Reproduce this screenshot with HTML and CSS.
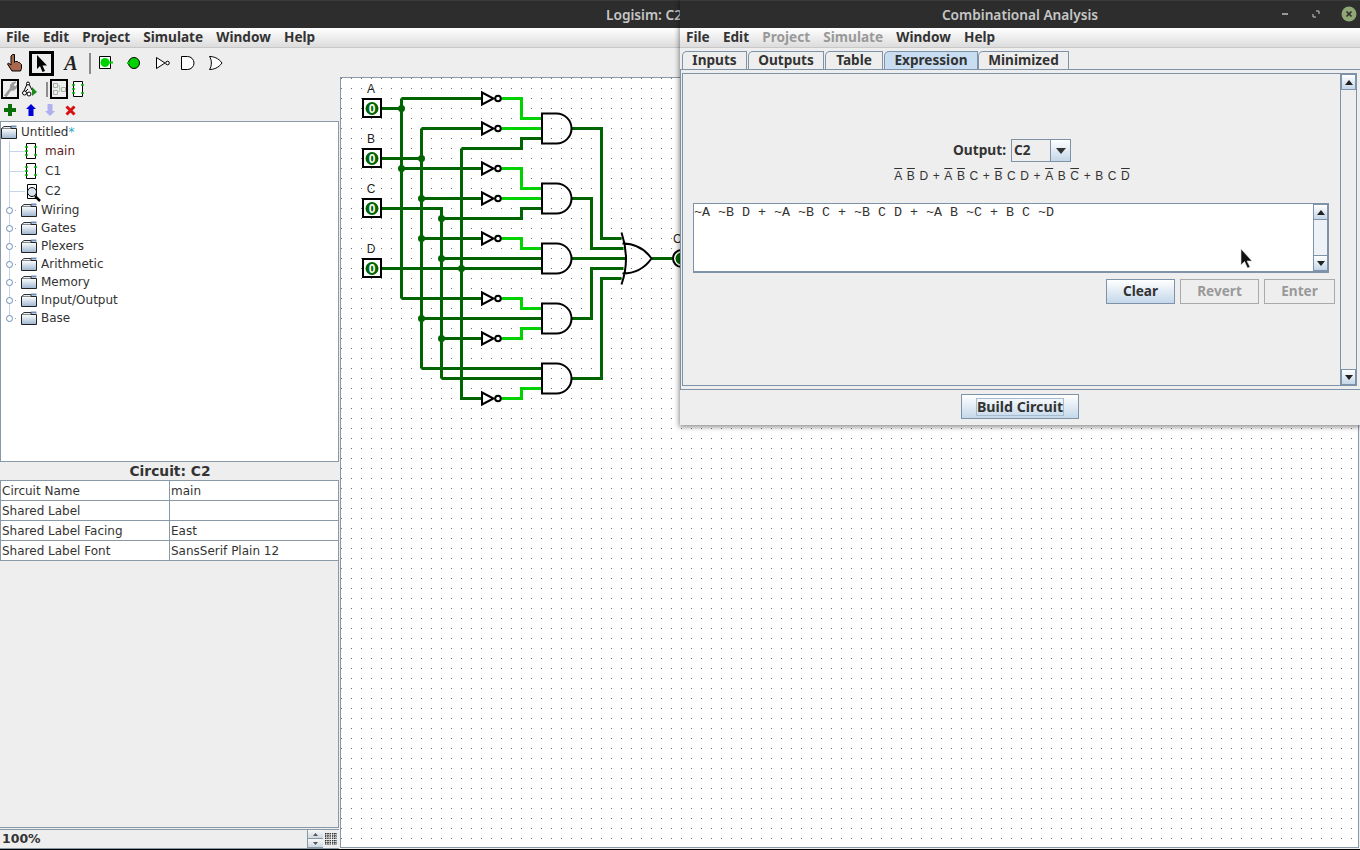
FILE: index.html
```html
<!DOCTYPE html>
<html lang="en">
<head>
<meta charset="utf-8">
<title>Logisim: C2</title>
<link rel="stylesheet" href="styles.css">
</head>
<body>
<svg class="defs" width="0" height="0" aria-hidden="true">
  <defs>
    <symbol id="folder" viewBox="0 0 16 14">
      <path d="M10 .5h5.500v2h-5.500z" fill="#6d8db8"/>
      <path d="M.5 3.500h15v10H.5z" fill="url(#fg)" stroke="#222"/>
      <path d="M.5 3.500 3 1.500h7v2" fill="#e8eef5" stroke="#333"/>
    </symbol>
    <linearGradient id="fg" x1="0" y1="0" x2="0" y2="1">
      <stop offset="0" stop-color="#ffffff"/><stop offset="1" stop-color="#9db5d0"/>
    </linearGradient>
    <symbol id="chip" viewBox="0 0 12 16">
      <path d="M1.500 .5h9v15h-9z" fill="#fff" stroke="#000"/>
      <path d="M0 4h3M0 8h3M0 12h3M9 4h3M9 12h3" stroke="#00c000" stroke-width="1.500"/>
    </symbol>
  </defs>
</svg>

<div class="app">
  <header class="titlebar main-title"><span class="title-text">Logisim: C2</span></header>
  <nav class="menubar">
    <span>File</span><span>Edit</span><span>Project</span><span>Simulate</span><span>Window</span><span>Help</span>
  </nav>
  <div class="toolbar">
    <span class="tool t-hand">
      <svg width="16" height="18" viewBox="0 0 16 18"><path d="M5.500 .5h2v8l1-1h2l1 1 1 0 1 1 1 1v4l-1 2.500H5l-2-3-2.500-4 1-1 2.500 2V2z" fill="#a9674c" stroke="#000"/></svg>
    </span>
    <span class="tool t-arrow">
      <svg width="12" height="17" viewBox="0 0 12 17"><path d="M1 0v14l3-3 2.500 6 2.500-1-2.500-5.500H11z" fill="#000"/></svg>
    </span>
    <span class="tool t-text">A</span>
    <span class="sep"></span>
    <span class="tool t-pin">
      <svg width="14" height="14" viewBox="0 0 14 14"><path d="M.5 .5h11v12H.5z" fill="#fff" stroke="#000"/><circle cx="6" cy="6.500" r="4.500" fill="#00d200"/><path d="M10 6.500h4" stroke="#00d200" stroke-width="2"/></svg>
    </span>
    <span class="tool t-led">
      <svg width="14" height="14" viewBox="0 0 14 14"><circle cx="7" cy="7" r="5.500" fill="#00d200" stroke="#000"/><path d="M0 7h2" stroke="#00d200" stroke-width="2"/></svg>
    </span>
    <span class="tool t-not">
      <svg width="16" height="14" viewBox="0 0 16 14"><path d="M1.500 1.500 10 7l-8.500 5.500z" fill="#fff" stroke="#000"/><circle cx="12.500" cy="7" r="1.800" fill="#fff" stroke="#000"/></svg>
    </span>
    <span class="tool t-and">
      <svg width="14" height="14" viewBox="0 0 14 14"><path d="M.5 .5h6a6.500 6.500 0 0 1 0 13h-6z" fill="#fff" stroke="#000"/></svg>
    </span>
    <span class="tool t-or">
      <svg width="14" height="14" viewBox="0 0 14 14"><path d="M.5 .5c4 0 9 1.500 12.500 6.500-3.500 5-8.500 6.500-12.500 6.500C3 10 3 4 .5 .5z" fill="#fff" stroke="#000"/></svg>
    </span>
  </div>

  <div class="workspace">
    <aside class="side">
      <div class="subtools">
        <span class="boxed">
          <svg width="14" height="16" viewBox="0 0 14 16"><path d="M1.500 14.500 7.500 7C6.500 4 9 1 13 1l-2.500 2.500.5 2 2 .5L14 4c0 3.500-2.500 6-6 5l-4.500 6.500z" fill="#9a9a9a" stroke="#9a9a9a"/></svg>
        </span>
        <span class="sub-analyze">
          <svg width="16" height="16" viewBox="0 0 16 16"><path d="M6 1 2 10M6 1l4 8M6 8l-3 3" stroke="#000" fill="none"/><circle cx="6" cy="2.500" r="1.500" fill="#fff" stroke="#000"/><circle cx="2.500" cy="12" r="2" fill="#fff" stroke="#000"/><circle cx="7" cy="13" r="2" fill="#fff" stroke="#000"/><path d="M10 6l5 5-5 4z" fill="#1c8a1c"/></svg>
        </span>
        <span class="sep sep-small"></span>
        <span class="boxed">
          <svg width="14" height="14" viewBox="0 0 14 14"><path d="M1.500 1.500h4v4h-4zM1.500 8.500h4v4h-4zM9.500 5.500h4v4h-4z" fill="#eee" stroke="#aaa"/><path d="M5.500 3.500h2v6h-2M7.500 7h2" fill="none" stroke="#a8d8a8"/></svg>
        </span>
        <span class="sub-chip"><svg width="12" height="16"><use href="#chip"/></svg></span>
      </div>
      <div class="listtools">
        <svg width="12" height="12" viewBox="0 0 12 12"><path d="M4 0h4v4h4v4H8v4H4V8H0V4h4z" fill="#0a6f0a"/></svg>
        <svg width="10" height="12" viewBox="0 0 10 12"><path d="M5 0l5 5H7.500v7h-5V5H0z" fill="#0000d8"/></svg>
        <svg width="10" height="12" viewBox="0 0 10 12"><path d="M2.500 0h5v7H10l-5 5-5-5h2.500z" fill="#b0b0ee"/></svg>
        <svg width="11" height="11" viewBox="0 0 11 11"><path d="M1.500 1.500l8 8M9.500 1.500l-8 8" stroke="#d81010" stroke-width="3"/></svg>
      </div>

      <div class="tree">
        <div class="node root"><svg class="ficon" width="16" height="14"><use href="#folder"/></svg><span>Untitled<span class="star">*</span></span></div>
        <div class="node leaf"><svg class="cicon" width="12" height="16"><use href="#chip"/></svg><span class="nm-main">main</span></div>
        <div class="node leaf"><svg class="cicon" width="12" height="16"><use href="#chip"/></svg><span class="nm-c">C1</span></div>
        <div class="node leaf"><svg class="cicon-mag" width="16" height="18" viewBox="0 0 16 18"><path d="M2.500 .5h9v14h-9z" fill="#fff" stroke="#000"/><circle cx="7" cy="8" r="4.500" fill="#d8e4f0" stroke="#000"/><path d="M10 12l5 5" stroke="#000" stroke-width="2.500"/></svg><span class="nm-c">C2</span></div>
        <div class="node lib"><i class="handle"></i><svg class="ficon" width="16" height="14"><use href="#folder"/></svg><span>Wiring</span></div>
        <div class="node lib"><i class="handle"></i><svg class="ficon" width="16" height="14"><use href="#folder"/></svg><span>Gates</span></div>
        <div class="node lib"><i class="handle"></i><svg class="ficon" width="16" height="14"><use href="#folder"/></svg><span>Plexers</span></div>
        <div class="node lib"><i class="handle"></i><svg class="ficon" width="16" height="14"><use href="#folder"/></svg><span>Arithmetic</span></div>
        <div class="node lib"><i class="handle"></i><svg class="ficon" width="16" height="14"><use href="#folder"/></svg><span>Memory</span></div>
        <div class="node lib"><i class="handle"></i><svg class="ficon" width="16" height="14"><use href="#folder"/></svg><span>Input/Output</span></div>
        <div class="node lib last"><i class="handle"></i><svg class="ficon" width="16" height="14"><use href="#folder"/></svg><span>Base</span></div>
      </div>

      <h2 class="attr-title">Circuit: C2</h2>
      <div class="attrs">
        <div>Circuit Name</div><div>main</div>
        <div>Shared Label</div><div></div>
        <div>Shared Label Facing</div><div>East</div>
        <div>Shared Label Font</div><div>SansSerif Plain 12</div>
      </div>
      <div class="attr-fill"></div>
      <div class="zoombar">
        <span class="zoom-val">100%</span>
        <span class="spinner">
          <i><svg width="5" height="3" viewBox="0 0 5 3"><path d="M2.500 0 5 3H0z" fill="#555"/></svg></i>
          <i><svg width="5" height="3" viewBox="0 0 5 3"><path d="M0 0h5L2.500 3z" fill="#555"/></svg></i>
        </span>
        <span class="gridbtn"></span>
      </div>
    </aside>

    <main class="canvas">
      <svg class="circuit" width="1017" height="769" viewBox="341 78 1017 769" font-family="'Liberation Sans', sans-serif">
        <defs>
          <pattern id="dots" x="341" y="78" width="10" height="10" patternUnits="userSpaceOnUse">
            <rect width="1" height="1" fill="#707070"/>
          </pattern>
        </defs>
        <rect x="341" y="78" width="1017" height="769" fill="url(#dots)"/>
        <g transform="translate(.5 .5)">
          <g class="w0">
            <path d="M381 108H401M401 98V298M401 98H481M401 168H481M401 298H481"/>
            <path d="M381 158H421M421 128V368M421 128H481M421 198H481M421 238H481M421 318H541M421 368H541"/>
            <path d="M381 208H441V378M441 218H521V208H541M441 258H541M441 338H481M441 378H541"/>
            <path d="M381 268H541M461 148V398H481M461 148H521V138H541"/>
            <path d="M571 128H601V238H621M571 198H591V248H623M571 258H625M571 318H591V268H623M571 378H601V278H621M651 258H672"/>
          </g>
          <g class="w1">
            <path d="M501 98H521V118H541M501 128H541M501 168H521V188H541M501 198H541M501 238H521V248H541M501 298H521V308H541M501 338H521V328H541M501 398H521V388H541"/>
          </g>
          <g fill="#006400">
            <circle cx="401" cy="108" r="3.500"/><circle cx="401" cy="168" r="3.500"/>
            <circle cx="421" cy="158" r="3.500"/><circle cx="421" cy="198" r="3.500"/><circle cx="421" cy="238" r="3.500"/><circle cx="421" cy="318" r="3.500"/>
            <circle cx="441" cy="218" r="3.500"/><circle cx="441" cy="258" r="3.500"/><circle cx="441" cy="338" r="3.500"/>
            <circle cx="461" cy="268" r="3.500"/>
          </g>
          <g class="gate">
            <path d="M481.500 92 493 98 481.500 104Z"/><circle cx="497.500" cy="98" r="2.800"/>
            <path d="M481.500 122 493 128 481.500 134Z"/><circle cx="497.500" cy="128" r="2.800"/>
            <path d="M481.500 162 493 168 481.500 174Z"/><circle cx="497.500" cy="168" r="2.800"/>
            <path d="M481.500 192 493 198 481.500 204Z"/><circle cx="497.500" cy="198" r="2.800"/>
            <path d="M481.500 232 493 238 481.500 244Z"/><circle cx="497.500" cy="238" r="2.800"/>
            <path d="M481.500 292 493 298 481.500 304Z"/><circle cx="497.500" cy="298" r="2.800"/>
            <path d="M481.500 332 493 338 481.500 344Z"/><circle cx="497.500" cy="338" r="2.800"/>
            <path d="M481.500 392 493 398 481.500 404Z"/><circle cx="497.500" cy="398" r="2.800"/>
            <path d="M541.500 113H556A15 15 0 0 1 556 143H541.500Z"/>
            <path d="M541.500 183H556A15 15 0 0 1 556 213H541.500Z"/>
            <path d="M541.500 243H556A15 15 0 0 1 556 273H541.500Z"/>
            <path d="M541.500 303H556A15 15 0 0 1 556 333H541.500Z"/>
            <path d="M541.500 363H556A15 15 0 0 1 556 393H541.500Z"/>
            <path d="M621 232Q630 258 621 284M622 243C634 243 644 248 651 258C644 268 634 273 622 273"/>
          </g>
          <g class="pin">
            <rect x="362.500" y="98.500" width="18" height="18"/><circle cx="371.500" cy="108" r="6.500"/>
            <rect x="362.500" y="148.500" width="18" height="18"/><circle cx="371.500" cy="158" r="6.500"/>
            <rect x="362.500" y="198.500" width="18" height="18"/><circle cx="371.500" cy="208" r="6.500"/>
            <rect x="362.500" y="258.500" width="18" height="18"/><circle cx="371.500" cy="268" r="6.500"/>
          </g>
          <circle cx="681" cy="258" r="8.500" fill="#fff" stroke="#000" stroke-width="2"/>
          <circle cx="681" cy="258" r="6" fill="#006400"/>
        </g>
        <g class="pinval">
          <text x="372" y="112.500">0</text><text x="372" y="162.500">0</text><text x="372" y="212.500">0</text><text x="372" y="272.500">0</text>
        </g>
        <g class="pinlabel">
          <text x="371" y="93">A</text><text x="371" y="143">B</text><text x="371" y="193">C</text><text x="371" y="253">D</text>
          <text class="lbl-out" x="673" y="243">C2</text>
        </g>
      </svg>
    </main>
  </div>
</div>

<section class="dialog">
  <header class="titlebar dlg-title">
    <span class="title-text">Combinational Analysis</span>
    <span class="winbtns">
      <svg width="10" height="10" viewBox="0 0 10 10"><path d="M1 5h6" stroke="#999" stroke-width="2"/></svg>
      <svg width="10" height="10" viewBox="0 0 10 10"><path d="M2 8V5M2 8h3M8 2v3M8 2H5" stroke="#999" stroke-width="1.500" fill="none"/></svg>
      <svg width="16" height="16" viewBox="0 0 16 16"><circle cx="8" cy="8" r="7.500" fill="#8fa876"/><path d="M5.500 5.500l5 5M10.500 5.500l-5 5" stroke="#2d2d2d" stroke-width="1.600"/></svg>
    </span>
  </header>
  <nav class="menubar dlg-menu">
    <span>File</span><span>Edit</span><span class="off">Project</span><span class="off">Simulate</span><span>Window</span><span>Help</span>
  </nav>
  <div class="tabs">
    <span class="tab tab-a">Inputs</span><span class="tab tab-b">Outputs</span><span class="tab tab-c">Table</span><span class="tab tab-d on">Expression</span><span class="tab tab-e">Minimized</span>
  </div>
  <div class="tabpane">
    <div class="scrollpane">
      <div class="pane-content">
        <div class="output-row">
          <label class="output-label">Output:</label>
          <span class="combo"><span class="combo-val">C2</span><span class="combo-btn"><svg width="10" height="6" viewBox="0 0 10 6"><path d="M0 0h10L5 6z" fill="#333"/></svg></span></span>
        </div>
        <div class="expr">
          <span class="n">A</span><span class="n">B</span><span>D</span><span>+</span>
          <span class="n">A</span><span class="n">B</span><span>C</span><span>+</span>
          <span class="n">B</span><span>C</span><span>D</span><span>+</span>
          <span class="n">A</span><span>B</span><span class="n">C</span><span>+</span>
          <span>B</span><span>C</span><span class="n">D</span>
        </div>
        <div class="textarea">
          <div class="ta-text">~A ~B D + ~A ~B C + ~B C D + ~A B ~C + B C ~D</div>
          <div class="ta-scroll">
            <span class="sb-btn"><svg width="8" height="5" viewBox="0 0 8 5"><path d="M4 0l4 5H0z" fill="#222"/></svg></span>
            <span class="sb-thumb"></span>
            <span class="sb-btn"><svg width="8" height="5" viewBox="0 0 8 5"><path d="M0 0h8L4 5z" fill="#222"/></svg></span>
          </div>
        </div>
        <div class="btn-row">
          <button class="btn b-clear" type="button">Clear</button>
          <button class="btn b-revert" type="button" disabled>Revert</button>
          <button class="btn b-enter" type="button" disabled>Enter</button>
        </div>
      </div>
      <div class="pane-scroll">
        <span class="sb-btn sb-big"><svg width="8" height="5" viewBox="0 0 8 5"><path d="M4 0l4 5H0z" fill="#222"/></svg></span>
        <span class="sb-track"></span>
        <span class="sb-btn sb-big"><svg width="8" height="5" viewBox="0 0 8 5"><path d="M0 0h8L4 5z" fill="#222"/></svg></span>
      </div>
    </div>
  </div>
  <div class="build-row"><button class="btn b-build" type="button"><span>Build Circuit</span></button></div>
</section>

<svg class="cursor" width="13" height="20" viewBox="0 0 13 20"><path d="M1 0v16l3.500-3.500 3 6.500 2.500-1-3-6H12z" fill="#111" stroke="#ddd" stroke-width=".6"/></svg>
</body>
</html>
```

FILE: styles.css
```css
* { box-sizing: border-box; }
html, body { margin: 0; height: 850px; overflow: hidden; }
body { position: relative; width: 1360px; background: #000; font-family: "DejaVu Sans", sans-serif; font-size: 12px; color: #333; }
.defs { display: block; height: 0; }

.app { height: 849px; display: flex; flex-direction: column; background: #eee; }

.titlebar { height: 28px; flex: none; background: #2d2d2d; color: #c6c6c6; font-family: "Noto Sans", sans-serif; font-weight: 600; font-size: 13.700px; display: flex; align-items: center; border-top: 1px solid #3a3a3a; }
.main-title { padding-left: 606px; }

.menubar { height: 20px; flex: none; display: flex; align-items: center; padding: 0 0 2px 6px; gap: 13.200px; font-family: "Noto Sans", sans-serif; font-weight: 700; font-size: 13.600px; color: #333; background: linear-gradient(#ffffff, #dcdcdc); border-bottom: 1px solid #c8c8c8; }
.menubar .off { color: #999; }

.toolbar { height: 30px; flex: none; display: flex; align-items: center; background: #eee; }
.tool { display: flex; align-items: center; justify-content: center; height: 25px; }
.t-hand { width: 26px; margin-left: 2px; }
.t-arrow { width: 25px; margin-left: 1px; border: 3px solid #000; }
.t-text { width: 34px; font: italic 700 20px "Liberation Serif", serif; color: #222; }
.sep { width: 2px; height: 21px; margin: 0 3px 0 1px; background: #8c8c8c; }
.t-pin { width: 30px; margin-left: -3px; }
.t-led { width: 26px; }
.t-not { width: 32px; }
.t-and { width: 18px; }
.t-or { width: 38px; }

.workspace { flex: 1; min-height: 0; display: flex; }
.side { width: 340px; flex: none; display: flex; flex-direction: column; background: #eee; }
.subtools { height: 22px; flex: none; display: flex; align-items: center; padding-left: 1px; }
.boxed { width: 18px; height: 20px; display: flex; align-items: center; justify-content: center; border: 2px solid #000; }
.sub-analyze { width: 16px; margin-left: 3px; margin-right: 6px; display: flex; }
.sep-small { height: 15px; margin: 0 2px; width: 2px; }
.sub-chip { margin-left: 4px; display: flex; }
.listtools { height: 21px; flex: none; display: flex; align-items: center; gap: 9.500px; padding: 0 0 1px 4px; }

.tree { height: 341px; flex: none; background-color: #fff; border: 1px solid #8a99a8; width: 339px; color: #333; }
.node { display: flex; align-items: center; height: 18px; gap: 4px; white-space: nowrap; }
.root { height: 19px; padding-left: 0; }
.leaf { height: 20px; padding-left: 24px; gap: 8px; background-image: linear-gradient(#c5d4e6, #c5d4e6), linear-gradient(#c5d4e6, #c5d4e6); background-size: 1px 100%, 16px 1px; background-position: 8px 0, 8px 50%; background-repeat: no-repeat; }
.cicon-mag { margin-right: -4px; margin-top: 4px; }
.nm-main { color: #5c2020; }
.lib { padding-left: 5px; background-image: linear-gradient(#c5d4e6, #c5d4e6); background-size: 1px 100%; background-position: 8px 0; background-repeat: no-repeat; }
.lib.last { background-size: 1px 50%; }
.handle { width: 7px; height: 7px; border: 1px solid #6d8db8; border-radius: 50%; background: #fff; flex: none; margin-right: 4px; box-shadow: 6px 0 0 -3px #6d8db8; }
.star { color: #25a9c8; }
.ficon { flex: none; }

.attr-title { margin: 0; height: 18px; flex: none; text-align: center; font: 700 13.800px/18px "DejaVu Sans", sans-serif; color: #333; }
.attrs { flex: none; width: 339px; display: grid; grid-template-columns: 169px 169px; grid-auto-rows: 20px; background: #fff; border: 1px solid #8a99a8; border-bottom: 0; }
.attrs > div { padding: 1px 0 0 1px; line-height: 19px; border-bottom: 1px solid #8a99a8; white-space: nowrap; }
.attrs > div:nth-child(odd) { border-right: 1px solid #8a99a8; }
.attr-fill { flex: 1; width: 339px; border-bottom: 1px solid #8a99a8; border-right: 1px solid #8a99a8; }
.zoombar { height: 20px; flex: none; width: 339px; display: flex; align-items: stretch; margin: 1px 0 0; border-top: 1px solid #8a99a8; border-bottom: 1px solid #8a99a8; }
.zoom-val { flex: 1; padding: 0 0 0 2px; font: 700 12.500px/18px "DejaVu Sans", sans-serif; color: #333; }
.spinner { width: 16px; display: flex; flex-direction: column; border-left: 1px solid #8a99a8; }
.spinner i { flex: 1; display: flex; align-items: center; justify-content: center; background: linear-gradient(#f8f8f8, #cfd8e2); border-bottom: 1px solid #8a99a8; }
.gridbtn { width: 12px; margin: 3px 2px 0 2px; height: 12px; background-image: radial-gradient(circle at .5px .5px, #222 .8px, transparent 1px); background-size: 2.300px 2.300px; }

.canvas { flex: 1; min-width: 0; margin: -1px 1px 1px 0; background: #fff; border: 1px solid #8a99a8; overflow: hidden; display: flex; }
.circuit { display: block; flex: none; }
.w0 path { fill: none; stroke: #006400; stroke-width: 3; }
.w1 path { fill: none; stroke: #00d200; stroke-width: 3; }
.gate path, .gate circle { fill: none; stroke: #000; stroke-width: 2; }
.pin rect { fill: #fff; stroke: #000; stroke-width: 2; }
.pin circle { fill: #006400; }
.pinval text { font-size: 12px; font-weight: 700; fill: #fff; text-anchor: middle; }
.pinlabel text { font-size: 12px; fill: #222; text-anchor: middle; }
.pinlabel .lbl-out { text-anchor: start; }

/* floating window on the desktop */
.dialog { position: absolute; left: 680px; top: 0; width: 680px; height: 425px; display: flex; flex-direction: column; background: #eee; box-shadow: 0 1px 5px 1px rgba(0, 0, 0, .45); }
.dlg-title { justify-content: center; }
.winbtns { position: absolute; right: 3px; top: 6px; display: flex; align-items: center; gap: 20px; }
.tabs { height: 21px; flex: none; display: flex; align-items: flex-end; padding-left: 2px; gap: 1px; }
.tab { height: 18px; display: flex; align-items: center; justify-content: center; padding-bottom: 2px; font: 700 13.600px "Noto Sans", sans-serif; color: #333; background: #eee; border: 1px solid #7f93a8; border-bottom: 0; border-top-left-radius: 5px; }
.tab-a { width: 65px; }
.tab-b { width: 76px; }
.tab-c { width: 58px; }
.tab-d { width: 94px; margin-right: -1px; }
.tab-e { width: 91px; }
.tab.on { background: #c8ddf2; }

.tabpane { height: 321px; flex: none; background: #eee; border-top: 1px solid #7f93a8; border-bottom: 1px solid #7f93a8; border-left: 1px solid #7f93a8; padding: 3px 0 3px 1px; }
.scrollpane { height: 100%; display: flex; margin-right: 3px; border: 1px solid #7f93a8; }
.pane-content { flex: 1; min-width: 0; padding-left: 10px; }
.pane-scroll { width: 16px; flex: none; display: flex; flex-direction: column; border-left: 1px solid #7f93a8; }
.sb-track { flex: 1; background: #eee; }
.sb-btn { height: 16px; flex: none; display: flex; align-items: center; justify-content: center; background: linear-gradient(#fff, #c4d6e8); border: 1px solid #7f93a8; }
.output-row { margin-top: 65px; display: flex; align-items: center; justify-content: center; gap: 5px; height: 23px; padding-right: 9px; }
.output-label { font: 700 13.700px/20px "Noto Sans", sans-serif; color: #333; padding-bottom: 2px; }
.combo { width: 60px; height: 23px; display: flex; border: 1px solid #7f93a8; background: #eee; }
.combo-val { flex: 1; padding-left: 2px; font: 700 13.600px/20px "Noto Sans", sans-serif; color: #333; }
.combo-btn { width: 20px; display: flex; align-items: center; justify-content: center; background: linear-gradient(#fff, #c4d6e8); border-left: 1px solid #7f93a8; }
.expr { margin-top: 7px; height: 14px; display: flex; justify-content: center; gap: 4.600px; padding-right: 9px; font: 12px/14px "Liberation Sans", sans-serif; color: #333; }
.expr .n { text-decoration: overline; text-decoration-thickness: 1px; }
.textarea { margin-top: 20px; width: 636px; height: 70px; display: flex; background: #fff; border: 1px solid #7f93a8; border-bottom-width: 2px; }
.ta-text { flex: 1; padding: 1px 0 0 0; font: 13.330px/15px "Liberation Mono", monospace; color: #333; white-space: pre; }
.ta-scroll { width: 15px; flex: none; display: flex; flex-direction: column; background: #eee; }
.sb-thumb { flex: 1; background: #eef1f5; border-left: 1px solid #7f93a8; border-right: 1px solid #7f93a8; }
.btn-row { margin-top: 6px; display: flex; justify-content: flex-end; gap: 5px; padding-right: 5px; }
.btn { height: 25px; padding: 0 0 2px; font: 700 13.600px "Noto Sans", sans-serif; color: #333; background: linear-gradient(#fff, #c4d8ea); border: 1px solid #7f93a8; }
.b-clear { width: 69px; }
.b-revert { width: 79px; }
.b-enter { width: 71px; }
.btn:disabled { color: #999; background: #eee; border-color: #aaa; }
.build-row { flex: 1; display: flex; justify-content: center; padding-top: 4px; }
.b-build { width: 118px; height: 25px; padding: 0; }
.b-build span { border: 1px solid #a8bccf; display: inline-block; line-height: 16px; font-size: 14.200px; }

.cursor { position: absolute; left: 1240px; top: 249px; }
```
